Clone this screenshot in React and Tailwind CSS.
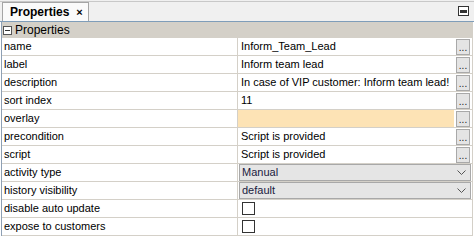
import React from "react";

const rows = [
  { k: "name", v: "Inform_Team_Lead", t: "btn" },
  { k: "label", v: "Inform team lead", t: "btn" },
  { k: "description", v: "In case of VIP customer: Inform team lead!", t: "btn" },
  { k: "sort index", v: "11", t: "btn" },
  { k: "overlay", v: "", t: "btn", hl: true },
  { k: "precondition", v: "Script is provided", t: "btn" },
  { k: "script", v: "Script is provided", t: "btn" },
  { k: "activity type", v: "Manual", t: "sel" },
  { k: "history visibility", v: "default", t: "sel" },
  { k: "disable auto update", t: "chk" },
  { k: "expose to customers", t: "chk" },
];

function Btn() {
  return (
    <div className="w-[14px] h-[16px] border border-[#a9a9a9] bg-[#e4e4e4] flex items-end justify-center text-[10px] leading-[12px] text-[#222] shrink-0">
      ...
    </div>
  );
}

function Chevron() {
  return (
    <svg width="9" height="6" viewBox="0 0 9 6" className="shrink-0">
      <path d="M0.5 0.5 L4.5 4.5 L8.5 0.5" fill="none" stroke="#555" strokeWidth="1" />
    </svg>
  );
}

export default function App() {
  return (
    <div className="w-[474px] h-[244px] bg-white overflow-hidden text-[11px] text-black" style={{ fontFamily: '"Liberation Sans", Arial, sans-serif' }}>
      {/* tab bar */}
      <div className="h-[22px] bg-[#f0f0f0] border-b border-[#7f9db9] flex items-end relative">
        <div className="absolute left-0 right-0 top-[1px] h-px bg-[#c8c8c8]" />
        <div className="ml-[2px] w-[87px] h-[19px] bg-[#fafafa] border border-b-0 border-[#a5a5a5] flex items-center pl-[7px] relative z-10">
          <span className="font-bold text-[12px]">Properties</span>
          <span className="ml-[7px] font-bold text-[11px]">×</span>
        </div>
        <div className="flex-1" />
        <div className="mr-[5px] mb-[5px] w-[11px] h-[10px] border border-[#333] bg-white flex items-center justify-center">
          <div className="w-[7px] h-[3px] bg-[#333]" />
        </div>
      </div>
      {/* grid */}
      <div className="border-l border-[#8ea0b4] ml-[1px] mr-[1px] border-r border-r-[#d4d0c8]">
        <div className="h-[16px] bg-[#d4d0c8] flex items-center pl-[1px]">
          <div className="w-[9px] h-[9px] border border-[#555] bg-white flex items-center justify-center">
            <div className="w-[5px] h-px bg-[#333]" />
          </div>
          <span className="ml-[3px] text-[12px]">Properties</span>
        </div>
        {rows.map((r) => (
          <div key={r.k} className="h-[18px] flex border-b border-[#d4d0c8]">
            <div className="w-[236px] border-r border-[#d4d0c8] pl-[2px] flex items-center">{r.k}</div>
            <div className="flex-1 flex items-center">
              {r.t === "btn" && (
                <>
                  <div className={`flex-1 h-full flex items-center pl-[3px] ${r.hl ? "bg-[#fde3b5]" : ""}`}>{r.v}</div>
                  <div className="w-[18px] h-full flex items-center justify-center">
                    <Btn />
                  </div>
                </>
              )}
              {r.t === "sel" && (
                <div className="flex-1 h-[17px] ml-px mr-px bg-[#e5e5e5] border border-[#a8a8a8] flex items-center pl-[2px] pr-[4px]">
                  <span className="flex-1 text-[#1a1a40]">{r.v}</span>
                  <Chevron />
                </div>
              )}
              {r.t === "chk" && (
                <div className="ml-[4px] w-[13px] h-[13px] border border-[#333] bg-white" />
              )}
            </div>
          </div>
        ))}
      </div>
    </div>
  );
}
